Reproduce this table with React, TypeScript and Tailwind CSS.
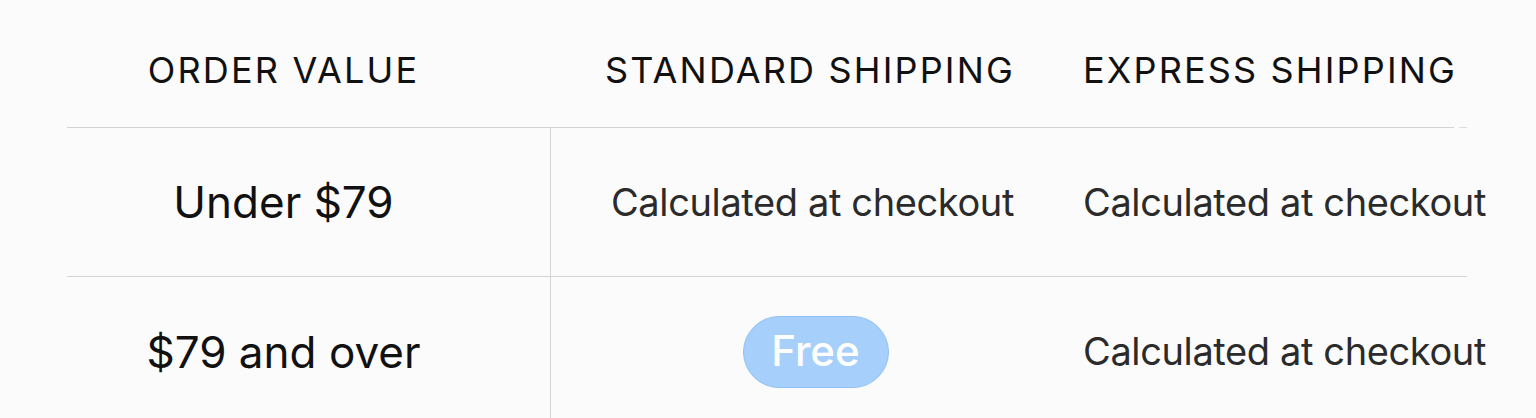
import React from 'react';

const rows = [
  { order: 'Under $79', standard: 'Calculated at checkout', free: false, express: 'Calculated at checkout' },
  { order: '$79 and over', standard: 'Free', free: true, express: 'Calculated at checkout' },
];

export default function App() {
  return (
    <div className="min-h-[418px] w-full overflow-hidden bg-[#fbfbfb] font-['Inter',sans-serif]">
      <div className="ml-[67px] w-[1400px]">
        {/* Header */}
        <div className="grid h-[127px] grid-cols-[483px_524px_393px] items-center pt-[13px] text-[36px] tracking-[0.06em] text-[#111]">
          <div className="pr-[50px] text-center">ORDER VALUE</div>
          <div className="pr-[4px] text-center">STANDARD SHIPPING</div>
          <div className="whitespace-nowrap pl-[9px]">EXPRESS SHIPPING</div>
        </div>
        <div className="flex h-px">
          <div className="w-[1400px] bg-[#d4d4d4]" />
          <div className="ml-[5px] w-[8px] shrink-0 bg-[#dcdcdc]" />
        </div>

        {rows.map((r, i) => (
          <div
            key={r.order}
            className={`grid h-[149px] grid-cols-[483px_524px_393px] items-center ${
              i < rows.length - 1 ? 'border-b border-[#d4d4d4]' : ''
            }`}
          >
            <div className="pr-[50px] text-center text-[44px] text-[#111]">{r.order}</div>
            <div className="flex h-full items-center justify-center border-l border-[#d4d4d4] text-[38px] tracking-[-0.01em] text-[#2b2b2b]">
              {r.free ? (
                <span className="ml-[6px] flex h-[72px] w-[146px] items-center justify-center rounded-full border border-[#8fc3f6] bg-[#a6d0fb] pb-[2px] text-[42px] font-medium tracking-normal text-white">
                  {r.standard}
                </span>
              ) : (
                r.standard
              )}
            </div>
            <div className="whitespace-nowrap pl-[9px] text-[38px] tracking-[-0.01em] text-[#2b2b2b]">{r.express}</div>
          </div>
        ))}
      </div>
    </div>
  );
}
